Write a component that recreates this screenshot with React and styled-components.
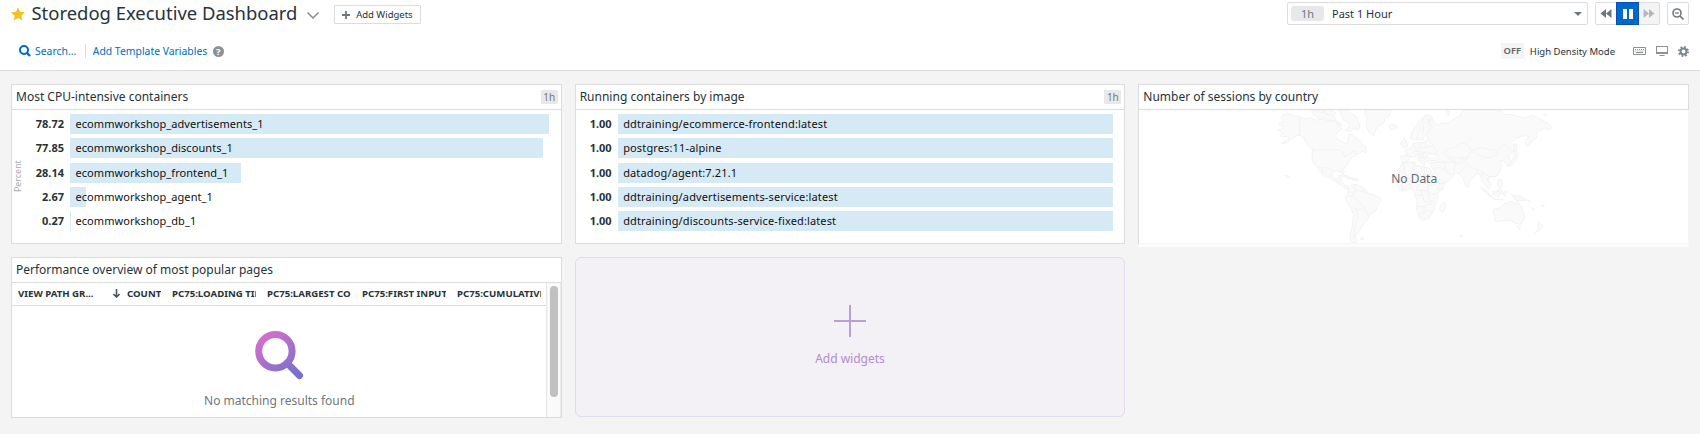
import React from "react";
import styled, { createGlobalStyle, css } from "styled-components";

const Global = createGlobalStyle`
  *, *::before, *::after { box-sizing: border-box; }
  body { margin: 0; background: #f4f4f4; font-family: "Noto Sans", "Open Sans", sans-serif; font-size: 12px; color: #273239; overflow: hidden; }
  button { font: inherit; color: inherit; margin: 0; padding: 0; background: none; border: 0; }
  svg { display: block; flex: none; }
`;

const Page = styled.div`height: 434px; overflow: hidden;`;

const Header = styled.header`
  height: 71px;
  background: #fff;
  border-bottom: 1px solid #dcdcdf;
`;

const Bar = styled.div`
  display: flex;
  align-items: center;
  justify-content: space-between;
  height: ${(p) => p.$h}px;
  padding: 0 11px;
`;

const Group = styled.div`
  display: flex;
  align-items: center;
  ${(p) => p.$indent && css`padding-left: ${p.$indent}px;`}
`;

const Title = styled.h1`
  margin: 0 10px 2px 6.5px;
  font-size: 18.45px;
  font-weight: 400;
  line-height: 24px;
  white-space: nowrap;
`;

const AddButton = styled.button`
  display: flex;
  align-items: center;
  justify-content: center;
  gap: 6px;
  width: 87px;
  height: 19px;
  margin: 2px 0 0 14.5px;
  border: 1px solid #dcdcdf;
  border-radius: 1px;
  font-size: 9.5px;
  white-space: nowrap;
`;

const TimeSelect = styled.div`
  display: flex;
  align-items: center;
  width: 301px;
  height: 23px;
  padding: 0 5px 0 3px;
  border: 1px solid #dcdcdf;
  border-radius: 2px;
  font-size: 11px;
`;

const TimeChip = styled.span`
  width: 33px;
  height: 15px;
  margin-right: 8px;
  border-radius: 3px;
  background: #e8e8ea;
  color: #6d787e;
  text-align: center;
  line-height: 15px;
`;

const Caret = styled.span`
  margin-left: auto;
  border: 4px solid transparent;
  border-top-color: #6d787e;
  border-bottom: 0;
`;

const Playback = styled.div`
  display: flex;
  height: 23px;
  margin: 0 7px;
  border: 1px solid #dcdcdf;
  border-radius: 2px;
`;

const PlayButton = styled.button`
  display: flex;
  align-items: center;
  justify-content: center;
  width: 20px;
  background: ${(p) => (p.$disabled ? "#f4f4f4" : "#fff")};
  ${(p) => p.$active && css`
    width: 23px;
    margin: -1px 0;
    background: #0068c6;
    border: 1px solid #0052b4;
  `}
`;

const ZoomButton = styled.button`
  display: flex;
  align-items: center;
  justify-content: center;
  width: 22px;
  height: 23px;
  border: 1px solid #dcdcdf;
  border-radius: 2px;
`;

const Link = styled.a`
  color: #006bc2;
  font-size: 10.4px;
  white-space: nowrap;
`;

const SearchLink = styled(Link)`margin-left: 4px;`;

const Divider = styled.span`
  width: 1px;
  height: 14px;
  margin: 0 6.5px 0 9px;
  background: #dcdcdf;
`;

const Help = styled.span`
  width: 11px;
  height: 11px;
  margin-left: 5.5px;
  border-radius: 50%;
  background: #8b9195;
  color: #fff;
  font-size: 9.5px;
  font-weight: 700;
  line-height: 11px;
  text-align: center;
`;

const OffChip = styled.span`
  width: 23px;
  height: 16px;
  margin-right: 6px;
  background: #f4f4f4;
  color: #5a666c;
  font-size: 9.4px;
  font-weight: 600;
  line-height: 16px;
  text-align: center;
`;

const ModeLabel = styled.span`
  margin-right: 18px;
  font-size: 9.5px;
  white-space: nowrap;
`;

const IconRow = styled.div`
  display: flex;
  align-items: center;
  gap: 10px;
`;

const Grid = styled.main`
  display: grid;
  grid-template-columns: repeat(3, 1fr);
  grid-template-rows: 160px 161px;
  gap: 13px;
  padding: 13px 11px 0;
`;

const Card = styled.section`
  display: flex;
  flex-direction: column;
  min-width: 0;
  min-height: 0;
  border: 1px solid #dcdcdf;
  background: #fff;
`;

const CardHead = styled.div`
  display: flex;
  flex: none;
  align-items: center;
  justify-content: space-between;
  height: 25px;
  padding: 0 3px 0 4px;
  border-bottom: 1px solid #dcdcdf;
`;

const CardTitle = styled.h2`
  margin: 0;
  font-size: 12px;
  font-weight: 400;
  line-height: 24px;
  white-space: nowrap;
`;

const Tag = styled.span`
  width: 17px;
  height: 14px;
  border-radius: 1px;
  background: #e8e8ea;
  color: #6d787e;
  font-size: 10px;
  line-height: 14px;
  text-align: center;
`;

const TopList = styled.div`
  display: flex;
  flex: 1;
  padding: 4px ${(p) => p.$right}px 0 0;
`;

const AxisLabel = styled.span`
  width: 12px;
  height: 125px;
  margin-right: 1px;
  color: #a7adb1;
  font-size: 8.9px;
  line-height: 12px;
  text-align: center;
  writing-mode: vertical-rl;
  transform: rotate(180deg);
`;

const Rows = styled.div`
  flex: 1;
  display: grid;
  grid-template-rows: repeat(5, 20px);
  row-gap: 4.33px;
`;

const Row = styled.div`
  display: flex;
  align-items: center;
  line-height: 20px;
`;

const Value = styled.span`
  width: ${(p) => p.$w}px;
  padding-right: 6px;
  font-size: 11px;
  font-weight: 700;
  text-align: right;
`;

const Track = styled.div`flex: 1; height: 20px;`;

const Fill = styled.div`
  height: 20px;
  background: #d6eaf5;
  color: #111;
  font-size: 11px;
  letter-spacing: ${(p) => p.$spacing}px;
  line-height: 20px;
  text-indent: 5.5px;
  white-space: nowrap;
`;

const MapBody = styled.div`
  position: relative;
  display: flex;
  flex: none;
  justify-content: center;
  height: 137px;
  margin-right: -1px;
`;

const MapVeil = styled.div`
  position: absolute;
  inset: 0;
  display: flex;
  align-items: center;
  justify-content: center;
  background: rgba(255, 255, 255, 0.7);
  color: #5f6b72;
`;

const TableBody = styled.div`
  display: flex;
  flex: 1;
  min-height: 0;
`;

const Table = styled.div`
  display: flex;
  flex: 1;
  flex-direction: column;
  min-width: 0;
`;

const TableHead = styled.div`
  display: grid;
  grid-template-columns: 84px 48px repeat(4, 84px);
  column-gap: 11px;
  flex: none;
  height: 23px;
  padding: 0 0 2px 6px;
  border-bottom: 1px solid #dcdcdf;
`;

const HeadCell = styled.span`
  display: flex;
  align-items: center;
  gap: 7px;
  overflow: hidden;
  font-size: 9.65px;
  font-weight: 700;
  white-space: nowrap;
`;

const Empty = styled.div`
  display: flex;
  flex-direction: column;
  align-items: center;
  padding: 25px 0 0 1px;
  color: #6d787e;
`;

const EmptyText = styled.span`margin-top: 12px; line-height: 18px;`;

const ScrollTrack = styled.div`
  width: 15px;
  padding: 3px 2px 0 3px;
  border-left: 1px solid #e4e4e6;
  border-right: 1px solid #ececee;
  background: #fafafa;
`;

const ScrollThumb = styled.div`
  width: 8px;
  height: 111px;
  border-radius: 4px;
  background: #c1c1c1;
`;

const AddCard = styled.button`
  display: flex;
  flex-direction: column;
  align-items: center;
  height: 160px;
  padding-top: 47px;
  border: 1px solid #e1daee;
  border-radius: 6px;
  background: #f3f0f6;
  color: #b08fcd;
  font-size: 12px;
`;

const AddLabel = styled.span`margin-top: 13px; line-height: 18px;`;

const LAND = [
  "M50 166L56 162L58 170L66 176L60 180L66 186L78 184L86 190L76 198L62 206L80 202L94 190L106 182L118 180L128 188L134 200L142 210L156 224L154 248L158 264L168 274L176 288L184 298L190 304L182 284L188 286L196 302L212 314L228 322L240 328L252 340L262 342L266 338L260 332L252 334L248 324L240 320L242 308L234 306L230 314L218 312L213 302L216 292L230 287L242 290L246 298L251 292L247 284L252 276L262 268L266 256L276 246L288 240L284 234L296 236L304 228L314 232L320 228L312 220L318 216L308 212L300 196L292 196L286 188L276 178L264 180L262 196L256 208L244 200L228 192L224 182L232 170L244 162L236 156L228 144L216 138L200 138L184 132L166 136L150 128L130 132L114 124L98 122L84 116L68 120L60 128L70 140L58 144L56 150L72 152L64 162Z",
  "M152 108L166 105L182 112L204 118L222 128L226 138L206 136L190 128L176 130L160 120Z",
  "M182 105L210 105L226 114L216 124L198 116Z",
  "M228 140L240 146L244 154L234 152Z",
  "M236 105L262 106L272 116L286 124L292 138L298 150L294 166L280 158L268 170L254 166L268 154L262 140L246 134L242 120Z",
  "M312 105L390 105L388 122L372 132L370 144L350 154L344 168L340 182L326 174L318 156L316 142L322 130L312 118Z",
  "M384 152L398 147L410 154L404 162L390 164Z",
  "M236 302L250 300L266 306L276 310L264 312L250 304Z",
  "M272 310L290 310L292 316L276 316Z",
  "M264 340L276 330L288 328L302 336L316 344L324 356L342 360L358 368L360 378L350 392L346 406L334 412L326 424L318 438L310 446L302 456L296 468L288 476L284 488L290 498L284 504L274 500L268 490L270 476L276 450L278 420L272 400L258 382L254 366L262 354Z",
  "M450 190L454 172L466 154L480 134L494 120L510 122L516 132L508 142L510 158L504 170L492 182L486 196L474 192L464 194Z",
  "M418 204L426 200L430 188L436 198L442 214L430 220L424 214Z",
  "M506 132L522 140L530 152L544 144L562 144L578 132L596 124L608 105L720 105L732 118L760 120L792 130L812 120L838 132L864 146L874 158L862 164L850 160L838 166L826 178L828 188L808 206L798 216L794 200L806 184L790 182L766 190L752 204L764 216L758 230L744 244L752 262L742 272L730 258L718 256L724 268L718 290L706 304L686 306L678 312L690 328L684 340L676 334L664 318L660 302L648 294L640 306L628 316L624 338L616 334L606 306L596 298L582 292L578 304L562 318L548 326L536 312L524 296L516 282L508 264L530 262L526 256L504 258L492 262L490 272L480 262L470 250L460 244L446 248L440 262L424 262L420 244L440 240L434 226L452 218L456 206L470 202L486 204L496 198L506 190L496 182L506 170L516 158L506 146Z",
  "M424 266L444 262L462 262L466 272L484 274L506 280L514 292L524 312L536 326L554 324L544 344L530 356L530 376L522 392L518 410L504 430L486 438L476 426L468 402L470 376L462 360L462 348L446 340L424 346L412 334L406 320L406 302L414 284Z",
  "M538 392L552 382L556 390L546 412L538 408Z",
  "M700 404L718 398L732 386L744 382L756 378L762 390L770 378L780 392L790 414L792 430L780 448L764 446L750 436L730 436L714 440L702 436L704 424L698 414Z",
  "M660 336L676 346L690 362L702 374L728 374L700 372L680 358Z",
  "M696 350L706 350L718 340L726 346L716 364L700 362Z",
  "M728 352L738 350L732 366Z",
  "M752 358L762 364L776 362L794 372L810 380L792 376L778 378L764 374Z",
  "M714 312L724 316L726 334L716 338L710 330Z",
  "M762 206L770 210L766 226L772 242L764 262L748 272L738 274L756 256L764 240L760 222Z",
  "M832 440L846 450L840 462L824 474L834 460Z",
  "M768 454L780 456L776 464Z",
  "M556 105L568 112L562 122L556 116Z",
  "M73 300L86 304L84 308Z",
  "M848 118L858 117L856 122Z",
  "M841 390L852 392L848 395Z",
  "M814 398L822 404L818 406Z",
  "M596 481L604 482L600 486Z",
  "M298 491L310 489L306 495Z",
];

const BORDERS = [
  "M117 127L117 180L128 186L140 202M156 224L236 225L248 232L252 246L276 230L284 230",
  "M170 274L190 278L204 280L216 290M206 308L212 300L218 308M228 320L236 318",
  "M262 354L280 350L292 346L304 348L322 354M280 330L284 346L276 362L262 364M276 364L292 378L302 388L318 410L322 424M278 398L292 404L304 404L316 416M286 402L292 430L282 456L278 494",
  "M494 122L482 146L474 170L468 192M500 130L506 150M490 140L488 176",
  "M458 206L466 226L454 234M478 204L478 220L466 228L484 232M492 200L498 216L478 220M498 216L518 214L530 230L518 238L502 232L484 232M500 190L512 204L518 214M484 232L488 248L500 246L516 240M436 242L450 246M462 238L474 240L480 254M470 234L482 240L492 236M478 244L492 250L488 258",
  "M550 232L564 220L580 218L600 204L620 208L634 226L622 248L604 246L584 250L560 244L550 232M634 226L660 218L690 224L714 226L710 240L682 248L650 240L634 226M714 226L728 208L744 216L756 232",
  "M530 262L552 262L554 284L538 278L520 280M552 262L574 262L584 266L580 290M584 266L604 264L612 256L600 248M612 256L620 268L606 284L596 296M620 268L640 282L654 284L648 296M622 248L612 256M654 284L668 292L664 306M668 292L684 304L682 320M562 250L576 258L590 262M554 284L562 296L576 298",
  "M424 266L432 278L412 294M462 264L456 282L466 300L444 310L430 296L432 278M466 300L490 300L490 276M490 300L520 300M436 296L434 318L408 318M444 310L450 322L436 336M466 300L466 320L450 328L452 342M490 300L490 322L472 330L468 344M490 322L506 332L526 328M506 332L500 346L470 346M500 346L508 358L528 356M470 362L486 360L490 378L506 382L520 376M468 394L490 396L490 412L474 420M490 396L504 386L518 390M490 412L504 406L516 410M500 346L504 370L512 380M536 326L530 344L546 342M422 322L424 344M480 346L484 360",
  "M762 360L764 374M700 352L718 350M500 420L506 424L502 428",
];

const FAST_BACK = "M6 0V9L0.5 4.5ZM11.5 0V9L6 4.5Z";

const cpu = [
  ["78.72", "ecommworkshop_advertisements_1", 479],
  ["77.85", "ecommworkshop_discounts_1", 473],
  ["28.14", "ecommworkshop_frontend_1", 171],
  ["2.67", "ecommworkshop_agent_1", 16],
  ["0.27", "ecommworkshop_db_1", 1],
];

const images = [
  "ddtraining/ecommerce-frontend:latest",
  "postgres:11-alpine",
  "datadog/agent:7.21.1",
  "ddtraining/advertisements-service:latest",
  "ddtraining/discounts-service-fixed:latest",
].map((name) => ["1.00", name, 495]);

function BarRows({ data, max, valueWidth, spacing }) {
  return (
    <Rows>
      {data.map(([value, name, w]) => (
        <Row key={name}>
          <Value $w={valueWidth}>{value}</Value>
          <Track>
            <Fill $spacing={spacing} style={{ width: `${(w / max) * 100}%` }}>{name}</Fill>
          </Track>
        </Row>
      ))}
    </Rows>
  );
}

function WorldMap() {
  return (
    <svg width="280" height="133.3" viewBox="40 105 840 400">
      <g fill="#efeff0" stroke="#d3d3d6" strokeWidth="3" strokeLinejoin="round">
        {LAND.map((d) => <path key={d} d={d} />)}
      </g>
      <g fill="none" stroke="#d3d3d6" strokeWidth="3" strokeLinejoin="round">
        {BORDERS.map((d) => <path key={d} d={d} />)}
      </g>
      <g fill="#fff" stroke="#dadadd" strokeWidth="2">
        <path d="M500 240L514 236L532 242L530 250L504 250Z" />
        <path d="M548 240L554 246L558 262L550 258Z" />
      </g>
    </svg>
  );
}

export default function App() {
  return (
    <Page>
      <Global />
      <Header>
        <Bar $h={27}>
          <Group>
            <svg width="14" height="14" viewBox="0 0 24 24" fill="#f0c323">
              <path d="M12 0.5L15.5 8.2L24 9.1L17.7 14.8L19.4 23.2L12 18.9L4.6 23.2L6.3 14.8L0 9.1L8.5 8.2Z" />
            </svg>
            <Title>Storedog Executive Dashboard</Title>
            <svg width="12" height="12" viewBox="0 0 12 12" fill="none" stroke="#828b90" strokeWidth="1.5">
              <path d="M0.5 4.5L6 10L11.5 4.5" />
            </svg>
            <AddButton>
              <svg width="8" height="8" viewBox="0 0 8 8" stroke="#6d787e" strokeWidth="1.8">
                <path d="M4 0V8M0 4H8" />
              </svg>
              Add Widgets
            </AddButton>
          </Group>
          <Group>
            <TimeSelect>
              <TimeChip>1h</TimeChip>
              Past 1 Hour
              <Caret />
            </TimeSelect>
            <Playback>
              <PlayButton>
                <svg width="12" height="9" viewBox="0 0 12 9" fill="#6d787e"><path d={FAST_BACK} /></svg>
              </PlayButton>
              <PlayButton $active>
                <svg width="10" height="10" viewBox="0 0 10 10" fill="#fff"><path d="M0 0H4V10H0ZM6 0H10V10H6Z" /></svg>
              </PlayButton>
              <PlayButton $disabled>
                <svg width="12" height="9" viewBox="0 0 12 9" fill="#b3b8bb"><path transform="matrix(-1 0 0 1 12 0)" d={FAST_BACK} /></svg>
              </PlayButton>
            </Playback>
            <ZoomButton>
              <svg width="12" height="12" viewBox="0 0 12 12" fill="none" stroke="#6d787e" strokeWidth="1.6">
                <circle cx="5" cy="5" r="4" /><path d="M8 8L11.5 11.5" /><path d="M3 5H7" strokeWidth="1.2" />
              </svg>
            </ZoomButton>
          </Group>
        </Bar>
        <Bar $h={48}>
          <Group $indent={8}>
            <svg width="12" height="12" viewBox="0 0 12 12" fill="none" stroke="#006bc2" strokeWidth="2">
              <circle cx="5" cy="5" r="4" /><path d="M8 8L11 11" strokeWidth="2.4" />
            </svg>
            <SearchLink>Search...</SearchLink>
            <Divider />
            <Link>Add Template Variables</Link>
            <Help>?</Help>
          </Group>
          <Group>
            <OffChip>OFF</OffChip>
            <ModeLabel>High Density Mode</ModeLabel>
            <IconRow>
              <svg width="13" height="8" viewBox="0 0 13 8" fill="none" stroke="#8b9195">
                <path d="M0.5 0.5H12.5V7.5H0.5Z" />
                <path d="M2 2.5H11M2.5 4H11" strokeDasharray="1 1" />
                <path d="M3 5.5H10" />
              </svg>
              <svg width="12" height="10" viewBox="0 0 12 10" fill="#8b9195">
                <path fillRule="evenodd" d="M0 0H12V8H0ZM1 1V6H11V1ZM3.5 9H8.5V10H3.5Z" />
              </svg>
              <svg width="11" height="11" viewBox="0 0 11 11" fill="none" stroke="#7d868b">
                <circle cx="5.5" cy="5.5" r="2.9" strokeWidth="2" />
                <circle cx="5.5" cy="5.5" r="4.6" strokeWidth="1.8" strokeDasharray="1.81 1.8" />
              </svg>
            </IconRow>
          </Group>
        </Bar>
      </Header>
      <Grid>
        <Card>
          <CardHead><CardTitle>Most CPU-intensive containers</CardTitle><Tag>1h</Tag></CardHead>
          <TopList $right={12}>
            <AxisLabel>Percent</AxisLabel>
            <BarRows data={cpu} max={479} valueWidth={45} spacing={0.07} />
          </TopList>
        </Card>
        <Card>
          <CardHead><CardTitle>Running containers by image</CardTitle><Tag>1h</Tag></CardHead>
          <TopList $right={11}>
            <BarRows data={images} max={495} valueWidth={42} spacing={0.14} />
          </TopList>
        </Card>
        <Card>
          <CardHead><CardTitle>Number of sessions by country</CardTitle></CardHead>
          <MapBody>
            <WorldMap />
            <MapVeil>No Data</MapVeil>
          </MapBody>
        </Card>
        <Card>
          <CardHead><CardTitle>Performance overview of most popular pages</CardTitle></CardHead>
          <TableBody>
            <Table>
              <TableHead>
                <HeadCell>VIEW PATH GR...</HeadCell>
                <HeadCell>
                  <svg width="7" height="9" viewBox="0 0 7 9" fill="none" stroke="#4a555b" strokeWidth="1.6">
                    <path d="M3.5 0V8M0.5 5L3.5 8L6.5 5" />
                  </svg>
                  COUNT
                </HeadCell>
                <HeadCell>PC75:LOADING TIM</HeadCell>
                <HeadCell>PC75:LARGEST CO</HeadCell>
                <HeadCell>PC75:FIRST INPUT</HeadCell>
                <HeadCell>PC75:CUMULATIVE</HeadCell>
              </TableHead>
              <Empty>
                <svg width="49" height="49" viewBox="0 0 49 49" fill="none" stroke="url(#lens)" strokeWidth="7">
                  <defs>
                    <linearGradient id="lens" gradientUnits="userSpaceOnUse" x1="8" y1="4" x2="36" y2="46">
                      <stop offset="0" stopColor="#d56fcd" />
                      <stop offset="1" stopColor="#7771cb" />
                    </linearGradient>
                  </defs>
                  <circle cx="20.4" cy="20.2" r="16.7" />
                  <path d="M32 32L44.5 44.5" strokeLinecap="round" />
                </svg>
                <EmptyText>No matching results found</EmptyText>
              </Empty>
            </Table>
            <ScrollTrack><ScrollThumb /></ScrollTrack>
          </TableBody>
        </Card>
        <AddCard>
          <svg width="32" height="32" viewBox="0 0 32 32" stroke="#b99fd3" strokeWidth="2">
            <path d="M16 0V32M0 16H32" />
          </svg>
          <AddLabel>Add widgets</AddLabel>
        </AddCard>
      </Grid>
    </Page>
  );
}
